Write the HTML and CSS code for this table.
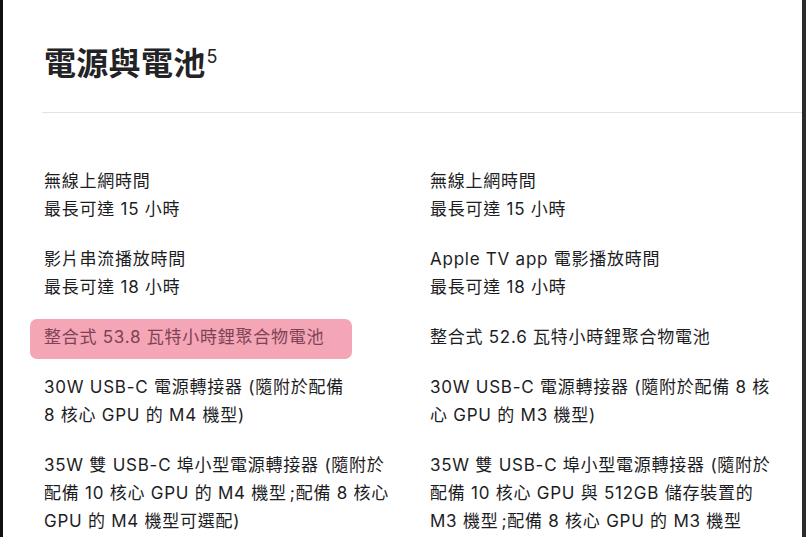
FILE: index.html
```html
<!DOCTYPE html>
<html lang="zh-Hant">
<head>
<meta charset="utf-8">
<title>電源與電池</title>
<link rel="stylesheet" href="styles.css">
</head>
<body>
<div class="frame">
  <main class="content">
    <header class="section-head">
      <h2 class="title">電源與電池<sup class="footnote">5</sup></h2>
    </header>
    <div class="specs">
      <div class="cell"><p>無線上網時間</p><p>最長可達 15 小時</p></div>
      <div class="cell"><p>無線上網時間</p><p>最長可達 15 小時</p></div>

      <div class="cell"><p>影片串流播放時間</p><p>最長可達 18 小時</p></div>
      <div class="cell"><p>Apple TV app 電影播放時間</p><p>最長可達 18 小時</p></div>

      <div class="cell"><p class="highlight">整合式 53.8 瓦特小時鋰聚合物電池</p></div>
      <div class="cell"><p>整合式 52.6 瓦特小時鋰聚合物電池</p></div>

      <div class="cell"><p>30W USB-C 電源轉接器 (隨附於配備<br>8 核心 GPU 的 M4 機型)</p></div>
      <div class="cell"><p>30W USB-C 電源轉接器 (隨附於配備 8 核<br>心 GPU 的 M3 機型)</p></div>

      <div class="cell"><p>35W 雙 USB-C 埠小型電源轉接器 (隨附於<br>配備 10 核心 GPU 的 M4 機型<span class="semi">;</span>配備 8 核心<br>GPU 的 M4 機型可選配)</p></div>
      <div class="cell"><p>35W 雙 USB-C 埠小型電源轉接器 (隨附於<br>配備 10 核心 GPU 與 512GB 儲存裝置的<br>M3 機型<span class="semi">;</span>配備 8 核心 GPU 的 M3 機型</p></div>
    </div>
  </main>
</div>
</body>
</html>
```

FILE: styles.css
```css
* { box-sizing: border-box; }

html, body {
  margin: 0;
  padding: 0;
  background: #ffffff;
}

body {
  font-family: "Inter", "Noto Sans CJK TC", "Noto Sans", sans-serif;
  color: #1d1d1f;
  height: 537px;
  overflow: hidden;
}

.frame {
  display: flex;
  height: 537px;
  border-left: 3px solid #111111;
  border-right: 4px solid #2a2a2a;
}

.content {
  flex: 1;
  padding-left: 39px;
}

.section-head {
  padding-top: 44px;
  padding-bottom: 28px;
  border-bottom: 1px solid #e3e3e5;
}

.title {
  margin: 0 0 0 2px;
  font-size: 32px;
  line-height: 40px;
  font-weight: 700;
  letter-spacing: 0.3px;
  color: #232325;
}

.footnote {
  font-size: 18px;
  font-weight: 400;
  line-height: 1;
  vertical-align: top;
  position: relative;
  top: 4px;
  margin-left: 1px;
}

.specs {
  display: grid;
  grid-template-columns: 346px 346px;
  column-gap: 40px;
  row-gap: 22px;
  margin-top: 54px;
  padding-left: 2px;
}

.cell p {
  margin: 0;
  font-size: 17px;
  line-height: 28px;
  letter-spacing: 0.75px;
  white-space: nowrap;
}

.semi {
  padding-left: 3px;
}

.cell p.highlight {
  background: #f4a5b6;
  color: #7e4254;
  border-radius: 7px;
  margin: -4px 0 -8px -14px;
  padding: 4px 14px 8px 14px;
  width: 322px;
}
```
